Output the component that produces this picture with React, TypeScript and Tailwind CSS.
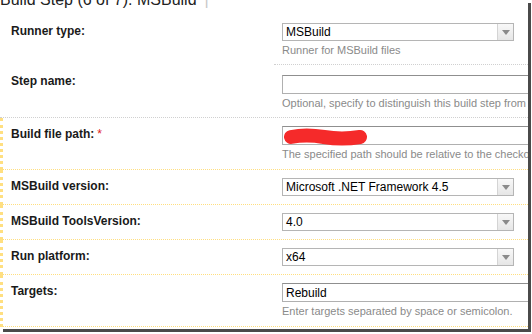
import React from 'react'

const font = { fontFamily: '"Liberation Sans", Arial, sans-serif' }

const Arrow = () => (
  <div className="flex h-full w-[16px] items-center justify-center border-l border-[#d4d4d4] bg-gradient-to-b from-[#f8f8f8] to-[#e6e6e6]">
    <svg width="8" height="5" viewBox="0 0 8 5">
      <path d="M0 0 L8 0 L4 5 Z" fill="#8a8a8a" />
    </svg>
  </div>
)

const Select = ({ value }: { value: string }) => (
  <div className="flex h-[18px] w-[232px] items-center justify-between border border-[#b5b5b5] bg-white">
    <span className="pl-[3px] text-[12px] leading-none text-black">{value}</span>
    <Arrow />
  </div>
)

const Input = ({ value, scribble }: { value?: string; scribble?: boolean }) => (
  <div className="relative flex h-[19px] w-[300px] items-center border border-[#b0b0b0] border-t-[#8f8f8f] bg-white">
    <span className="pl-[3px] text-[12px] leading-none text-black">{value}</span>
    {scribble && (
      <svg className="absolute left-[1px] top-[1px]" width="84" height="18" viewBox="0 0 84 18">
        <path d="M7 9 Q 22 6 40 9 T 76 9" stroke="#f52a2a" strokeWidth="14" strokeLinecap="round" fill="none" />
      </svg>
    )}
  </div>
)

const Help = ({ children }: { children: React.ReactNode }) => (
  <div className="mt-[3px] whitespace-nowrap text-[11px] leading-[12px] text-[#8a8a8a]">{children}</div>
)

type RowProps = {
  label: string
  required?: boolean
  highlight?: boolean
  rightSepOnly?: boolean
  tall?: boolean
  children: React.ReactNode
}

const Row = ({ label, required, highlight, rightSepOnly, tall, children }: RowProps) => (
  <div
    className={
      'flex ' +
      (highlight ? 'border-l-[3px] border-[#ffdf80] ' : '') +
      (rightSepOnly ? '' : 'border-b border-dotted border-[#d0d0d0]')
    }
  >
    <div
      className={
        'shrink-0 pt-[9px] text-[12px] font-bold leading-[14px] text-[#1a1a1a] ' +
        (highlight ? 'w-[271px] pl-[8px]' : 'w-[274px] pl-[11px]')
      }
    >
      {label}
      {required && <span className="ml-[3px] font-normal text-[#e02020]">*</span>}
    </div>
    <div
      className={
        'min-w-0 flex-1 pl-[8px] pt-[8px] ' +
        (tall ? 'pb-[9px] ' : 'pb-[8px] ') +
        (rightSepOnly ? 'border-b border-dotted border-[#d0d0d0]' : '')
      }
    >
      {children}
    </div>
  </div>
)

export default function App() {
  return (
    <div className="h-[334px] w-[532px] overflow-hidden bg-white" style={font}>
      <div className="h-[329px] w-[528px] overflow-hidden bg-white shadow-[3px_3px_0_#4a4a4a]">
        <div className="-mt-[9px] flex items-center whitespace-nowrap text-[16px] leading-[18px] text-[#222]">
          Build Step (6 of 7): MSBuild
          <span className="ml-[8px] text-[#c8c8c8]">|</span>
        </div>
        <div className="mt-[6px]">
          <Row label="Runner type:" rightSepOnly>
            <Select value="MSBuild" />
            <Help>Runner for MSBuild files</Help>
          </Row>
          <Row label="Step name:">
            <div className="pt-[2px]">
              <Input />
            </div>
            <Help>Optional, specify to distinguish this build step from other build steps.</Help>
          </Row>
          <Row label="Build file path:" required highlight tall>
            <Input scribble />
            <Help>The specified path should be relative to the checkout directory.</Help>
          </Row>
          <Row label="MSBuild version:" highlight>
            <Select value="Microsoft .NET Framework 4.5" />
          </Row>
          <Row label="MSBuild ToolsVersion:" highlight>
            <Select value="4.0" />
          </Row>
          <Row label="Run platform:" highlight>
            <Select value="x64" />
          </Row>
          <Row label="Targets:" highlight tall>
            <Input value="Rebuild" />
            <Help>Enter targets separated by space or semicolon.</Help>
          </Row>
        </div>
      </div>
    </div>
  )
}
